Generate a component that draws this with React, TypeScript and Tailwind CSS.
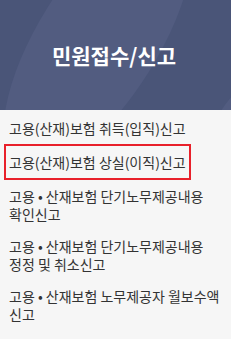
export default function App() {
  const items = [
    "고용(산재)보험 취득(입직)신고",
    "고용(산재)보험 상실(이직)신고",
    "고용 • 산재보험 단기노무제공내용 확인신고",
    "고용 • 산재보험 단기노무제공내용 정정 및 취소신고",
    "고용 • 산재보험 노무제공자 월보수액 신고",
  ];
  const active = 1;

  return (
    <div
      className="w-[231px] h-[339px] overflow-hidden bg-[#f6f6f6]"
      style={{ fontFamily: '"Noto Sans CJK KR", "Noto Sans", sans-serif' }}
    >
      <div className="relative h-[110px] overflow-hidden bg-[#4a5578] flex items-center justify-center">
        <div className="absolute left-[38px] top-[-110px] w-[120px] h-[300px] rounded-[50%] bg-[#525c80] rotate-[32deg]" />
        <div className="absolute left-[214px] top-[78px] w-[70px] h-[110px] rounded-[50%] bg-[#525c80] rotate-[25deg]" />
        <h1 className="relative text-white text-[21px] font-bold leading-none mt-[1px] -ml-[3px]">
          민원접수/신고
        </h1>
      </div>
      <ul className="pt-[1.5px]">
        {items.map((t, i) => (
          <li key={t} className={i === active ? "py-0" : "pl-[9px] pr-[4px] py-[7px]"}>
            {i === active ? (
              <span className="inline-block ml-[4px] border-2 border-[#e8202a] pl-[3px] pr-[3px] py-[7px] text-[14px] leading-[18px] text-[#333] break-keep">
                {t}
              </span>
            ) : (
              <span className="block text-[14px] leading-[18px] text-[#333] break-keep">{t}</span>
            )}
          </li>
        ))}
      </ul>
    </div>
  );
}
